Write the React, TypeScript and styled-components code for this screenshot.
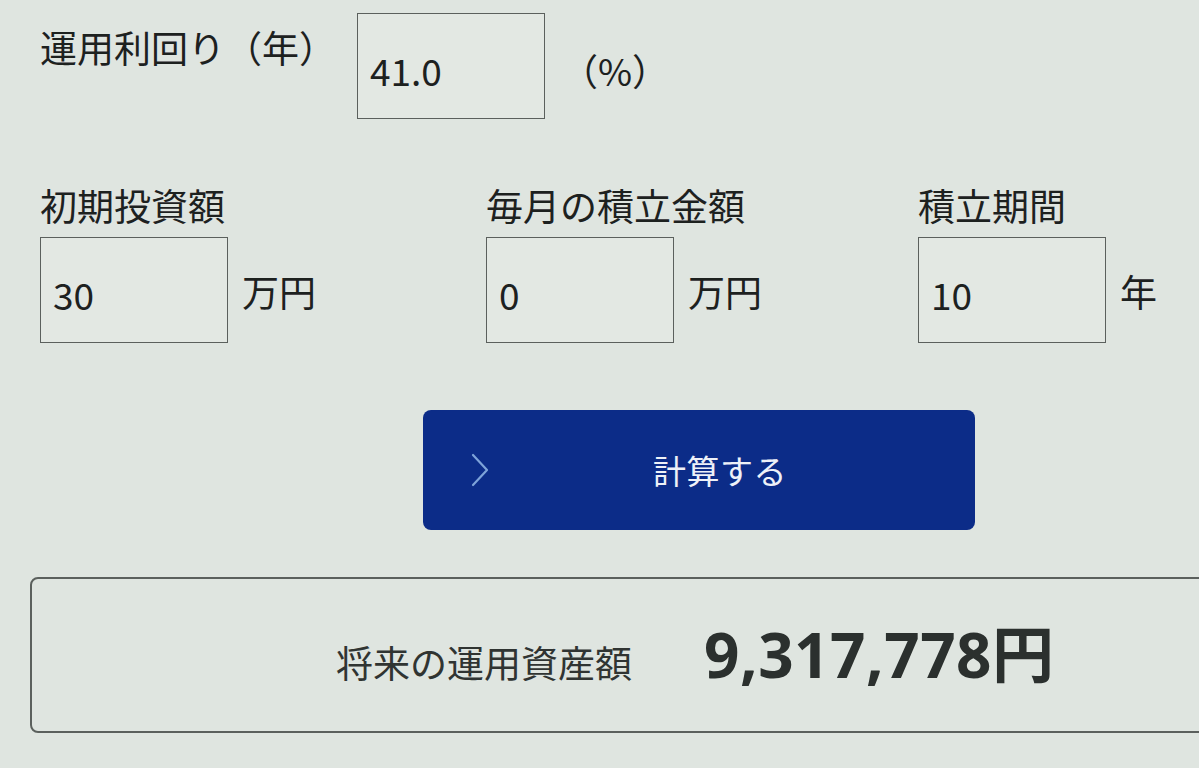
// Asset simulator form

// ___________________________________________________________________

import * as React from 'react'
import styled, { createGlobalStyle } from 'styled-components'

// ___________________________________________________________________

const colors = {
  page: '#dfe5e0',
  field: '#e3e8e3',
  border: '#5b605d',
  text: '#1d211f',
  muted: '#303432',
  total: '#2b302e',
  navy: '#0c2c88',
  chevron: '#7ea3d9',
  buttonText: '#eef1f8'
}

const font = `'Noto Sans CJK JP', 'Noto Sans', sans-serif`

const GlobalStyle = createGlobalStyle`
  html, body {
    margin: 0;
    padding: 0;
    background: ${colors.page};
    overflow: hidden;
  }
  body {
    font-family: ${font};
    color: ${colors.text};
  }
`

// ___________________________________________________________________

type Field = {
  label: string
  value: string
  unit: string
}

const fields: Field[] = [
  { label: '初期投資額', value: '30', unit: '万円' },
  { label: '毎月の積立金額', value: '0', unit: '万円' },
  { label: '積立期間', value: '10', unit: '年' }
]

const Chevron = () => (
  <svg width="18" height="34" viewBox="0 0 18 34" fill="none">
    <path
      d="M2 2 L16 17 L2 32"
      stroke={colors.chevron}
      strokeWidth="2.2"
      strokeLinecap="round"
      strokeLinejoin="round"
    />
  </svg>
)

const App: React.FC = () => {
  return (
    <Page>
      <GlobalStyle />

      <RateRow>
        <Label>運用利回り（年）</Label>
        <Input defaultValue="41.0" />
        <Unit $gap={16}>（%）</Unit>
      </RateRow>

      <FieldGrid>
        {fields.map(f => (
          <FieldCol key={f.label}>
            <Label>{f.label}</Label>
            <InputLine>
              <Input defaultValue={f.value} />
              <Unit $gap={14}>{f.unit}</Unit>
            </InputLine>
          </FieldCol>
        ))}
      </FieldGrid>

      <ButtonRow>
        <CalcButton type="button">
          <Chevron />
          <span>計算する</span>
        </CalcButton>
      </ButtonRow>

      <ResultBox>
        <ResultLabel>将来の運用資産額</ResultLabel>
        <ResultValue>9,317,778円</ResultValue>
      </ResultBox>
    </Page>
  )
}

export default App

// ___________________________________________________________________

const Page = styled.main`
  width: 1199px;
  height: 768px;
  box-sizing: border-box;
  padding: 13px 0 0 40px;
  display: flex;
  flex-direction: column;
  font-family: ${font};
`

const RateRow = styled.div`
  display: flex;
  align-items: flex-start;

  & > span:first-child {
    margin-top: 12px;
    width: 317px;
  }

  & > span:last-child {
    align-self: center;
    margin-top: 8px;
  }
`

const Label = styled.span`
  display: block;
  font-size: 37px;
  line-height: 44px;
  font-weight: 400;
  color: ${colors.text};
  white-space: nowrap;
`

const Input = styled.input`
  width: 188px;
  height: 106px;
  box-sizing: border-box;
  margin: 0;
  padding: 8px 0 0 12px;
  border: 1.5px solid ${colors.border};
  border-radius: 0;
  background: ${colors.field};
  font-family: ${font};
  font-size: 37px;
  color: ${colors.text};
  outline: none;
`

const Unit = styled.span<{ $gap: number }>`
  margin-left: ${p => p.$gap}px;
  font-size: 37px;
  line-height: 44px;
  color: ${colors.text};
  white-space: nowrap;
`

const FieldGrid = styled.div`
  display: grid;
  grid-template-columns: 446px 432px auto;
  margin-top: 64px;
`

const FieldCol = styled.div`
  display: flex;
  flex-direction: column;
  gap: 10px;
`

const InputLine = styled.div`
  display: flex;
  align-items: center;

  ${Unit} {
    margin-top: 2px;
  }
`

const ButtonRow = styled.div`
  display: flex;
  padding-left: 383px;
  margin-top: 67px;
`

const CalcButton = styled.button`
  width: 552px;
  height: 120px;
  display: flex;
  align-items: center;
  padding: 0 0 0 48px;
  border: 0;
  border-radius: 8px;
  background: ${colors.navy};
  cursor: pointer;

  span {
    flex: 1;
    margin-right: 24px;
    text-align: center;
    font-family: ${font};
    font-size: 33px;
    color: ${colors.buttonText};
    letter-spacing: 0.5px;
  }
`

const ResultBox = styled.section`
  width: 1220px;
  height: 156px;
  box-sizing: border-box;
  margin: 47px 0 0 -10px;
  padding-left: 304px;
  display: flex;
  align-items: baseline;
  border: 2px solid ${colors.border};
  border-radius: 8px;
  line-height: 150px;
`

const ResultLabel = styled.span`
  font-size: 37px;
  color: ${colors.muted};
  white-space: nowrap;
`

const ResultValue = styled.span`
  margin-left: 72px;
  font-family: 'Noto Sans', 'Noto Sans CJK JP', sans-serif;
  font-size: 62px;
  font-weight: 700;
  color: ${colors.total};
  letter-spacing: 0.5px;
  white-space: nowrap;
`
